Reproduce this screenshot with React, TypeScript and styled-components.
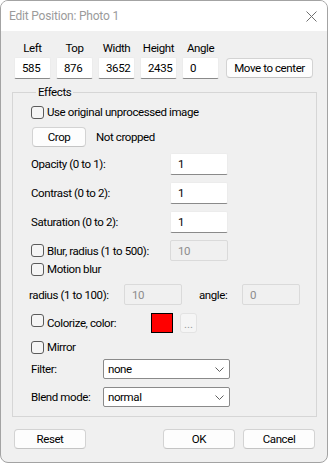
import React from "react";
import styled, {createGlobalStyle} from "styled-components";

const GlobalStyle = createGlobalStyle`
    body {
        margin: 0;
        font-family: Roboto, "Noto Sans", sans-serif;
        font-size: 11.5px;
        letter-spacing: -0.4px;
        color: #000;
    }
`

const Dialog = styled.div`
    width: 328px;
    height: 463px;
    box-sizing: border-box;
    border: 1px solid #a3a3a3;
    border-radius: 8px;
    overflow: hidden;
    background: #f0f0f0;
    display: flex;
    flex-direction: column;
`

const TitleBar = styled.div`
    height: 30px;
    flex: none;
    background: #fff;
    display: flex;
    align-items: center;
    justify-content: space-between;
    padding: 0 10px 0 8px;
    color: #9b9b9b;
    font-size: 12px;
    letter-spacing: -0.2px;
`

const CloseIcon = () => (
    <svg width="11" height="11" viewBox="0 0 11 11">
        <path d="M0.5 0.5 L10.5 10.5 M10.5 0.5 L0.5 10.5" stroke="#6f6f6f" strokeWidth="1" fill="none"/>
    </svg>
)

const Body = styled.div`
    flex: 1;
    padding-top: 9px;
`

const TopRow = styled.div`
    display: flex;
    align-items: flex-end;
    gap: 5px;
    padding-left: 13px;
`

const Field = styled.div`
    width: 37px;
    display: flex;
    flex-direction: column;
    align-items: center;
`

const FieldLabel = styled.div`
    line-height: 16px;
    margin-bottom: 1px;
`

const TextBox = styled.div<{ $w: number, $h?: number, $disabled?: boolean }>`
    width: ${p => p.$w}px;
    height: ${p => p.$h ?? 22}px;
    box-sizing: border-box;
    flex: none;
    display: flex;
    align-items: center;
    padding-left: 7px;
    background: ${p => p.$disabled ? "#f0f0f0" : "#fff"};
    border: 1px solid ${p => p.$disabled ? "#dadada" : "#ececec"};
    border-bottom-color: ${p => p.$disabled ? "#dadada" : "#8a8a8a"};
    border-radius: 2px;
    color: ${p => p.$disabled ? "#8c8c8c" : "#000"};
`

const Button = styled.div<{ $w: number }>`
    width: ${p => p.$w}px;
    height: 20px;
    box-sizing: border-box;
    flex: none;
    display: flex;
    align-items: center;
    justify-content: center;
    background: #fdfdfd;
    border: 1px solid #d3d3d3;
    border-bottom-color: #c4c4c4;
    border-radius: 4px;
    white-space: nowrap;
`

const MoveButton = styled(Button)`
    margin-left: 2px;
    margin-bottom: 1px;
`

const Group = styled.fieldset`
    width: 305px;
    box-sizing: border-box;
    margin: 6px 0 0 11px;
    padding: 0 0 9px 18px;
    border: 1px solid #d6d6d6;
    min-width: 0;
`

const Legend = styled.legend`
    margin-left: 5px;
    padding: 0 2px;
    line-height: 14px;
`

const Row = styled.div<{ $top: number, $h: number }>`
    display: flex;
    align-items: center;
    margin-top: ${p => p.$top}px;
    height: ${p => p.$h}px;
    white-space: nowrap;
`

const Lead = styled.div<{ $w: number }>`
    width: ${p => p.$w}px;
    flex: none;
    display: flex;
    align-items: center;
    white-space: nowrap;
`

const Check = styled.span`
    width: 13px;
    height: 13px;
    box-sizing: border-box;
    flex: none;
    border: 1px solid #5b5b5b;
    border-radius: 3px;
    background: #f5f5f5;
    margin-right: 3px;
`

const CheckTop = styled(Check)`
    align-self: flex-start;
    margin-top: 1px;
`

const Note = styled.span`
    margin-left: 10px;
`

const Swatch = styled.div`
    width: 22px;
    height: 20px;
    box-sizing: border-box;
    flex: none;
    background: #ff0000;
    border: 1px solid #000;
`

const DotsButton = styled.div`
    width: 17px;
    height: 20px;
    box-sizing: border-box;
    margin-left: 7px;
    flex: none;
    display: flex;
    align-items: flex-end;
    justify-content: center;
    padding-bottom: 3px;
    background: #f5f5f5;
    border: 1px solid #e3e3e3;
    border-radius: 3px;
    color: #9a9a9a;
    line-height: 10px;
    letter-spacing: 0;
`

const Select = styled.div<{ $w: number }>`
    width: ${p => p.$w}px;
    height: 20px;
    box-sizing: border-box;
    flex: none;
    display: flex;
    align-items: center;
    justify-content: space-between;
    padding: 0 5px 0 4px;
    background: #fff;
    border: 1px solid #8a8a8a;
    border-radius: 2px;
`

const Chevron = () => (
    <svg width="9" height="5" viewBox="0 0 9 5">
        <path d="M0.5 0.5 L4.5 4.5 L8.5 0.5" stroke="#5f5f5f" strokeWidth="1" fill="none"/>
    </svg>
)

const Footer = styled.div`
    display: flex;
    gap: 8px;
    margin-top: 12px;
    padding: 0 12px 0 13px;

    & > :first-child {
        margin-right: auto;
    }
`

const fields = [
    {label: "Left", value: "585"},
    {label: "Top", value: "876"},
    {label: "Width", value: "3652"},
    {label: "Height", value: "2435"},
    {label: "Angle", value: "0"},
]

export default function App() {
    return (
        <>
            <GlobalStyle/>
            <Dialog>
                <TitleBar>
                    <span>Edit Position: Photo 1</span>
                    <CloseIcon/>
                </TitleBar>
                <Body>
                    <TopRow>
                        {fields.map(f => (
                            <Field key={f.label}>
                                <FieldLabel>{f.label}</FieldLabel>
                                <TextBox $w={37}>{f.value}</TextBox>
                            </Field>
                        ))}
                        <MoveButton $w={87}>Move to center</MoveButton>
                    </TopRow>

                    <Group>
                        <Legend>Effects</Legend>
                        <Row $top={4} $h={18}>
                            <Check/>Use original unprocessed image
                        </Row>
                        <Row $top={6} $h={20}>
                            <Button $w={54} style={{marginLeft: 1}}>Crop</Button>
                            <Note>Not cropped</Note>
                        </Row>
                        <Row $top={6} $h={22}>
                            <Lead $w={139}>Opacity (0 to 1):</Lead>
                            <TextBox $w={58}>1</TextBox>
                        </Row>
                        <Row $top={7} $h={22}>
                            <Lead $w={139}>Contrast (0 to 2):</Lead>
                            <TextBox $w={58}>1</TextBox>
                        </Row>
                        <Row $top={7} $h={22}>
                            <Lead $w={139}>Saturation (0 to 2):</Lead>
                            <TextBox $w={58}>1</TextBox>
                        </Row>
                        <Row $top={7} $h={21}>
                            <Lead $w={139}><Check/>Blur, radius (1 to 500):</Lead>
                            <TextBox $w={58} $h={21} $disabled>10</TextBox>
                        </Row>
                        <Row $top={0} $h={16}>
                            <Check/>Motion blur
                        </Row>
                        <Row $top={7} $h={21} style={{marginLeft: -2}}>
                            <Lead $w={95}>radius (1 to 100):</Lead>
                            <TextBox $w={58} $h={21} $disabled>10</TextBox>
                            <Lead $w={60} style={{paddingLeft: 17, boxSizing: "border-box"}}>angle:</Lead>
                            <TextBox $w={58} $h={21} $disabled>0</TextBox>
                        </Row>
                        <Row $top={8} $h={20}>
                            <Lead $w={120} style={{alignSelf: "stretch"}}><CheckTop/>Colorize, color:</Lead>
                            <Swatch/>
                            <DotsButton>...</DotsButton>
                        </Row>
                        <Row $top={6} $h={16}>
                            <Check/>Mirror
                        </Row>
                        <Row $top={4} $h={20}>
                            <Lead $w={72}>Filter:</Lead>
                            <Select $w={127}>none<Chevron/></Select>
                        </Row>
                        <Row $top={8} $h={20}>
                            <Lead $w={72}>Blend mode:</Lead>
                            <Select $w={127}>normal<Chevron/></Select>
                        </Row>
                    </Group>

                    <Footer>
                        <Button $w={72}>Reset</Button>
                        <Button $w={72}>OK</Button>
                        <Button $w={72}>Cancel</Button>
                    </Footer>
                </Body>
            </Dialog>
        </>
    );
}
